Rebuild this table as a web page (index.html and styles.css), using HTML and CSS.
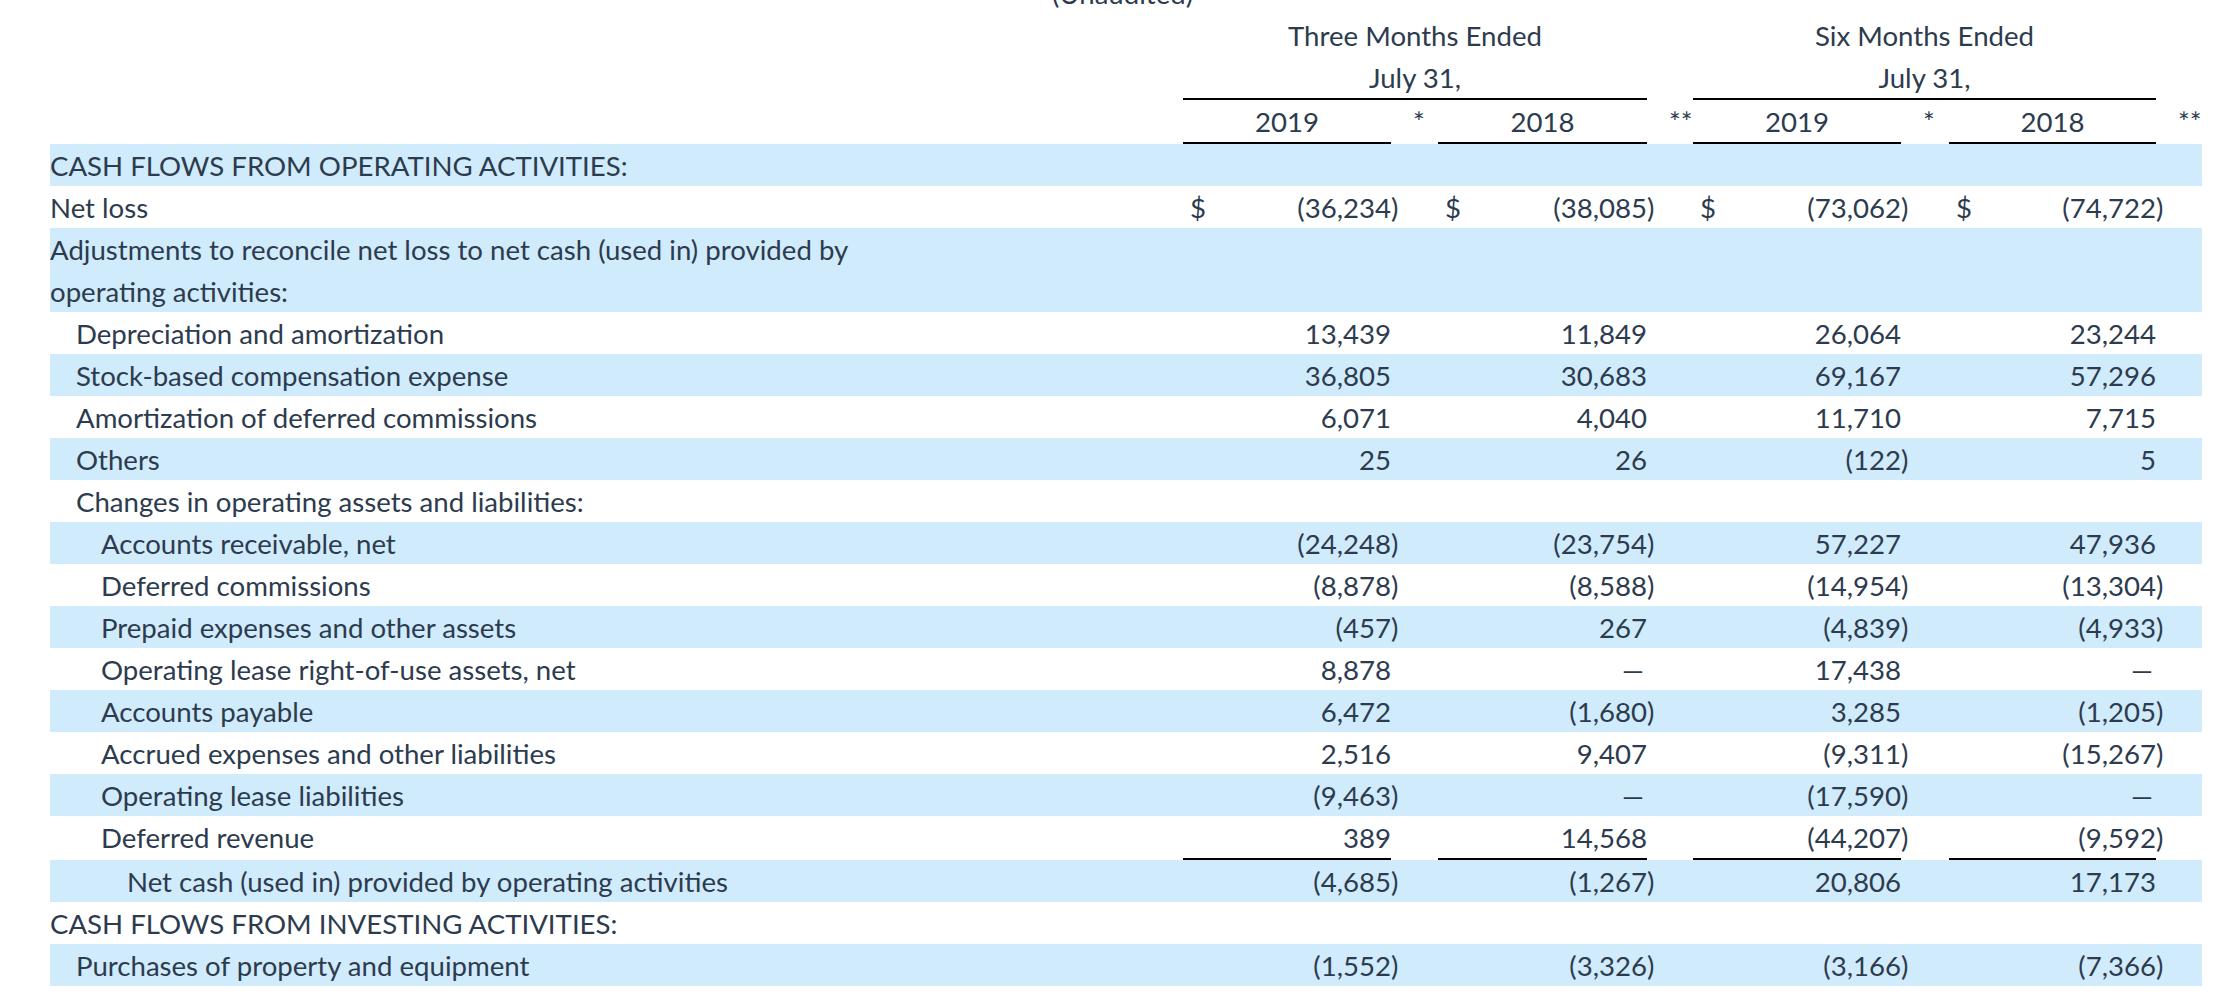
FILE: index.html
```html
<!DOCTYPE html>
<html lang="en">
<head>
<meta charset="utf-8">
<title>Cash Flows</title>
<link rel="stylesheet" href="styles.css">
</head>
<body>
<div class="sheet">
  <div class="row head">
    <div class="unaudited">(Unaudited)</div>
  </div>
  <div class="row head">
    <div class="lbl"></div>
    <div class="span3">Three Months Ended</div>
    <div class="gap"></div>
    <div class="span3">Six Months Ended</div>
    <div class="gap"></div>
  </div>
  <div class="row head">
    <div class="lbl"></div>
    <div class="span3 rule">July 31,</div>
    <div class="gap"></div>
    <div class="span3 rule">July 31,</div>
    <div class="gap"></div>
  </div>
  <div class="row head">
    <div class="lbl"></div>
    <div class="val yr rule">2019</div><div class="gap ast">*</div>
    <div class="val yr rule">2018</div><div class="gap ast">**</div>
    <div class="val yr rule">2019</div><div class="gap ast">*</div>
    <div class="val yr rule">2018</div><div class="gap ast">**</div>
  </div>

  <div class="row band">
    <div class="lbl l0">CASH FLOWS FROM OPERATING ACTIVITIES:</div>
  </div>
  <div class="row">
    <div class="lbl l0">Net loss</div>
    <div class="val"><span class="cur">$</span><span>(36,234</span></div><div class="gap">)</div>
    <div class="val"><span class="cur">$</span><span>(38,085</span></div><div class="gap">)</div>
    <div class="val"><span class="cur">$</span><span>(73,062</span></div><div class="gap">)</div>
    <div class="val"><span class="cur">$</span><span>(74,722</span></div><div class="gap">)</div>
  </div>
  <div class="row band tall">
    <div class="lbl l0 wrap">Adjustments to reconcile net loss to net cash (used in) provided by operating activities:</div>
  </div>
  <div class="row">
    <div class="lbl l1">Depreciation and amortization</div>
    <div class="val">13,439</div><div class="gap"></div>
    <div class="val">11,849</div><div class="gap"></div>
    <div class="val">26,064</div><div class="gap"></div>
    <div class="val">23,244</div><div class="gap"></div>
  </div>
  <div class="row band">
    <div class="lbl l1">Stock-based compensation expense</div>
    <div class="val">36,805</div><div class="gap"></div>
    <div class="val">30,683</div><div class="gap"></div>
    <div class="val">69,167</div><div class="gap"></div>
    <div class="val">57,296</div><div class="gap"></div>
  </div>
  <div class="row">
    <div class="lbl l1">Amortization of deferred commissions</div>
    <div class="val">6,071</div><div class="gap"></div>
    <div class="val">4,040</div><div class="gap"></div>
    <div class="val">11,710</div><div class="gap"></div>
    <div class="val">7,715</div><div class="gap"></div>
  </div>
  <div class="row band">
    <div class="lbl l1">Others</div>
    <div class="val">25</div><div class="gap"></div>
    <div class="val">26</div><div class="gap"></div>
    <div class="val">(122</div><div class="gap">)</div>
    <div class="val">5</div><div class="gap"></div>
  </div>
  <div class="row">
    <div class="lbl l1">Changes in operating assets and liabilities:</div>
  </div>
  <div class="row band">
    <div class="lbl l2">Accounts receivable, net</div>
    <div class="val">(24,248</div><div class="gap">)</div>
    <div class="val">(23,754</div><div class="gap">)</div>
    <div class="val">57,227</div><div class="gap"></div>
    <div class="val">47,936</div><div class="gap"></div>
  </div>
  <div class="row">
    <div class="lbl l2">Deferred commissions</div>
    <div class="val">(8,878</div><div class="gap">)</div>
    <div class="val">(8,588</div><div class="gap">)</div>
    <div class="val">(14,954</div><div class="gap">)</div>
    <div class="val">(13,304</div><div class="gap">)</div>
  </div>
  <div class="row band">
    <div class="lbl l2">Prepaid expenses and other assets</div>
    <div class="val">(457</div><div class="gap">)</div>
    <div class="val">267</div><div class="gap"></div>
    <div class="val">(4,839</div><div class="gap">)</div>
    <div class="val">(4,933</div><div class="gap">)</div>
  </div>
  <div class="row">
    <div class="lbl l2">Operating lease right-of-use assets, net</div>
    <div class="val">8,878</div><div class="gap"></div>
    <div class="val"><span class="dash">—</span></div><div class="gap"></div>
    <div class="val">17,438</div><div class="gap"></div>
    <div class="val"><span class="dash">—</span></div><div class="gap"></div>
  </div>
  <div class="row band">
    <div class="lbl l2">Accounts payable</div>
    <div class="val">6,472</div><div class="gap"></div>
    <div class="val">(1,680</div><div class="gap">)</div>
    <div class="val">3,285</div><div class="gap"></div>
    <div class="val">(1,205</div><div class="gap">)</div>
  </div>
  <div class="row">
    <div class="lbl l2">Accrued expenses and other liabilities</div>
    <div class="val">2,516</div><div class="gap"></div>
    <div class="val">9,407</div><div class="gap"></div>
    <div class="val">(9,311</div><div class="gap">)</div>
    <div class="val">(15,267</div><div class="gap">)</div>
  </div>
  <div class="row band">
    <div class="lbl l2">Operating lease liabilities</div>
    <div class="val">(9,463</div><div class="gap">)</div>
    <div class="val"><span class="dash">—</span></div><div class="gap"></div>
    <div class="val">(17,590</div><div class="gap">)</div>
    <div class="val"><span class="dash">—</span></div><div class="gap"></div>
  </div>
  <div class="row">
    <div class="lbl l2">Deferred revenue</div>
    <div class="val rule">389</div><div class="gap"></div>
    <div class="val rule">14,568</div><div class="gap"></div>
    <div class="val rule">(44,207</div><div class="gap">)</div>
    <div class="val rule">(9,592</div><div class="gap">)</div>
  </div>
  <div class="row band">
    <div class="lbl l3">Net cash (used in) provided by operating activities</div>
    <div class="val">(4,685</div><div class="gap">)</div>
    <div class="val">(1,267</div><div class="gap">)</div>
    <div class="val">20,806</div><div class="gap"></div>
    <div class="val">17,173</div><div class="gap"></div>
  </div>
  <div class="row">
    <div class="lbl l0">CASH FLOWS FROM INVESTING ACTIVITIES:</div>
  </div>
  <div class="row band">
    <div class="lbl l1">Purchases of property and equipment</div>
    <div class="val">(1,552</div><div class="gap">)</div>
    <div class="val">(3,326</div><div class="gap">)</div>
    <div class="val">(3,166</div><div class="gap">)</div>
    <div class="val">(7,366</div><div class="gap">)</div>
  </div>
</div>
</body>
</html>
```

FILE: styles.css
```css
html, body {
  margin: 0;
  padding: 0;
  background: #ffffff;
}

body {
  font-family: Lato, "Open Sans", "Liberation Sans", sans-serif;
  font-size: 27.6px;
  color: #2d3b4e;
  overflow: hidden;
}

.sheet {
  width: 2152px;
  margin: -28px 0 0 50px;
}

.row {
  display: grid;
  grid-template-columns: 1133px 208px 47px 209px 46px 208px 48px 207px 46px;
  line-height: 40px;
  padding-top: 2px;
  min-height: 40px;
}

.row.tall {
  line-height: 41.5px;
  padding-top: 1px;
  min-height: 83px;
}

.band {
  background: #d0ebfc;
}

.lbl {
  grid-column: 1;
  white-space: nowrap;
}

.lbl.wrap {
  white-space: normal;
  max-width: 870px;
}

.l0 { padding-left: 0; }
.l1 { padding-left: 26px; }
.l2 { padding-left: 51px; }
.l3 { padding-left: 77px; }

.unaudited {
  grid-column: 1 / -1;
  padding-left: 1002px;
  white-space: nowrap;
}

.span3 {
  grid-column: span 3;
  text-align: center;
}

.val {
  display: flex;
  justify-content: space-between;
  white-space: nowrap;
}

.val:not(:has(.cur)) {
  justify-content: flex-end;
}

.val.yr {
  justify-content: center;
}

.cur {
  padding-left: 7px;
}

.dash {
  padding-right: 3px;
}

.gap {
  white-space: nowrap;
}

.gap.ast {
  padding-left: 22px;
}

.rule {
  border-bottom: 2px solid #000000;
}
```
